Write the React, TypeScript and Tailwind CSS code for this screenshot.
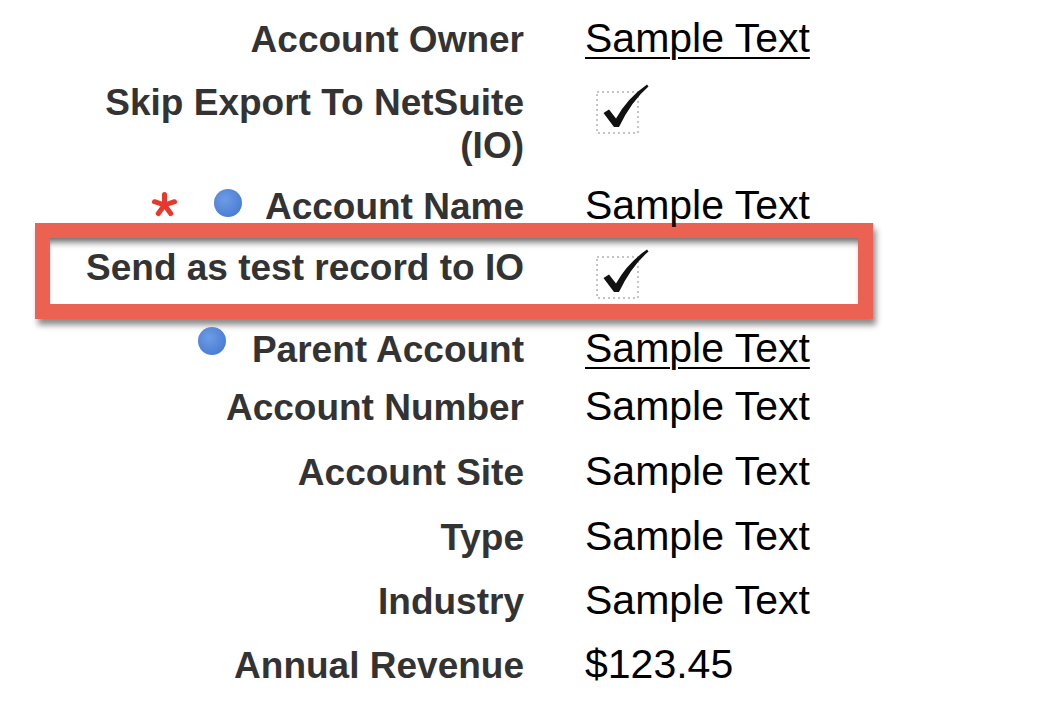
import React from 'react';

type Marker = 'required' | 'dot';

interface Field {
  label: React.ReactNode;
  value?: string;
  link?: boolean;
  checked?: boolean;
  markers?: Marker[];
  rowClass: string;
  dotClass?: string;
  textGap?: string;
}

// dotted checkbox with a hand drawn tick, like the old classic layout
const CheckMark = () => (
  <svg width="54" height="51" viewBox="0 0 54 51" className="inline-block align-[-20px] ml-[11px]">
    <rect x="1" y="8" width="41" height="41" fill="none" stroke="#c4c4c4" strokeWidth="2" strokeDasharray="2 3" />
    <path d="M7.5 29 L13 25.5 L20 34.5 Q31.5 14 51 0.5 L52.5 2.5 Q35.5 17 23 43 L18 43 Z" fill="#111" />
  </svg>
);

// five armed required marker
const Asterisk = () => (
  <svg width="27" height="25" viewBox="0 0 27 25" className="inline-block align-[2px] mr-[36px]">
    <g stroke="#e8372b" strokeWidth="5" strokeLinecap="round">
      <line x1="13.5" y1="13" x2="13.5" y2="2.5" />
      <line x1="13.5" y1="13" x2="23.5" y2="9.7" />
      <line x1="13.5" y1="13" x2="19.7" y2="21.5" />
      <line x1="13.5" y1="13" x2="7.3" y2="21.5" />
      <line x1="13.5" y1="13" x2="3.5" y2="9.7" />
    </g>
  </svg>
);

const Label = ({ field }: { field: Field }) => (
  <div className="w-full text-right text-[37px] leading-[43px] font-bold text-[#333]">
    {field.markers?.includes('required') && <Asterisk />}
    {field.markers?.includes('dot') && (
      <span
        className={`inline-block w-[28px] h-[28px] rounded-full bg-[radial-gradient(circle_at_40%_38%,#6d9ce6,#3f73cc)] ${field.dotClass} ${field.textGap}`}
      />
    )}
    {field.label}
  </div>
);

const Value = ({ field }: { field: Field }) => (
  <div className="ml-[61px] text-[41px] leading-[43px] text-black whitespace-nowrap">
    {field.checked ? (
      <CheckMark />
    ) : field.link ? (
      <span className="underline decoration-[2px] underline-offset-[5px]">{field.value}</span>
    ) : (
      field.value
    )}
  </div>
);

const Row = ({ field, labelWidth = 'w-[524px]' }: { field: Field; labelWidth?: string }) => (
  <div className={`flex items-baseline ${field.rowClass}`}>
    <div className={`${labelWidth} shrink-0`}>
      <Label field={field} />
    </div>
    <Value field={field} />
  </div>
);

const topFields: Field[] = [
  { label: 'Account Owner', value: 'Sample Text', link: true, rowClass: 'h-[63px]' },
  {
    label: (
      <>
        Skip Export To NetSuite
        <br />
        (IO)
      </>
    ),
    checked: true,
    rowClass: 'h-[104px]',
  },
  {
    label: 'Account Name',
    value: 'Sample Text',
    markers: ['required', 'dot'],
    dotClass: 'align-[2px]',
    textGap: 'mr-[23px]',
    rowClass: 'h-[39px]',
  },
];

const highlighted: Field = { label: 'Send as test record to IO', checked: true, rowClass: 'h-[44px] mt-[7px]' };

const bottomFields: Field[] = [
  {
    label: 'Parent Account',
    value: 'Sample Text',
    link: true,
    markers: ['dot'],
    dotClass: 'align-[7px]',
    textGap: 'mr-[26px]',
    rowClass: 'h-[58px] mt-[8px]',
  },
  { label: 'Account Number', value: 'Sample Text', rowClass: 'h-[65px]' },
  { label: 'Account Site', value: 'Sample Text', rowClass: 'h-[65px]' },
  { label: 'Type', value: 'Sample Text', rowClass: 'h-[64px]' },
  { label: 'Industry', value: 'Sample Text', rowClass: 'h-[64px]' },
  { label: 'Annual Revenue', value: '$123.45', rowClass: 'h-[44px]' },
];

export default function App() {
  return (
    <div className="w-[1042px] h-[724px] overflow-hidden bg-white pt-[17px] font-['Liberation_Sans',Arial,sans-serif]">
      {topFields.map((f, i) => (
        <Row key={i} field={f} />
      ))}

      {/* highlighted row */}
      <div className="ml-[35px] w-[838px] h-[96px] border-[15px] border-[#eb6253] bg-white shadow-[3px_6px_6px_rgba(0,0,0,0.45),inset_0_8px_7px_-4px_rgba(0,0,0,0.6)]">
        <Row field={highlighted} labelWidth="w-[474px]" />
      </div>

      {bottomFields.map((f, i) => (
        <Row key={i} field={f} />
      ))}
    </div>
  );
}
